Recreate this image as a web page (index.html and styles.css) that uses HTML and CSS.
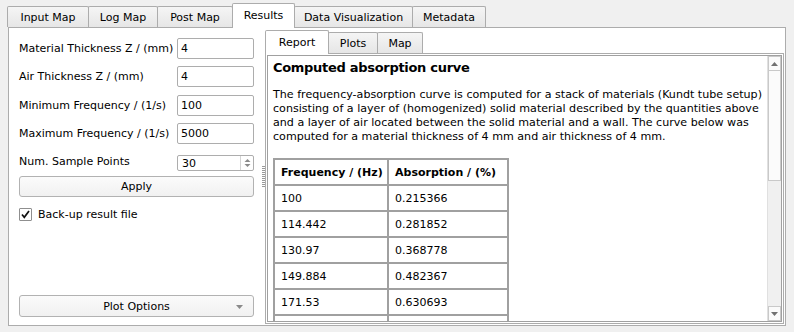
FILE: index.html
```html
<!DOCTYPE html>
<html lang="en">
<head>
    <meta charset="UTF-8">
    <title>Results</title>
    <link rel="stylesheet" href="styles.css">
</head>
<body>
    <div class="window">
        <div class="tabbar">
            <div class="tab tab-input">Input Map</div>
            <div class="tab tab-log">Log Map</div>
            <div class="tab tab-post">Post Map</div>
            <div class="tab tab-results active">Results</div>
            <div class="tab tab-dataviz">Data Visualization</div>
            <div class="tab tab-meta">Metadata</div>
        </div>

        <div class="pane">
            <div class="left">
                <div class="form">
                    <div class="row">
                        <span class="label">Material Thickness Z / (mm)</span>
                        <div class="field">4</div>
                    </div>
                    <div class="row">
                        <span class="label">Air Thickness Z / (mm)</span>
                        <div class="field">4</div>
                    </div>
                    <div class="row">
                        <span class="label">Minimum Frequency / (1/s)</span>
                        <div class="field">100</div>
                    </div>
                    <div class="row">
                        <span class="label">Maximum Frequency / (1/s)</span>
                        <div class="field">5000</div>
                    </div>
                    <div class="row">
                        <span class="label">Num. Sample Points</span>
                        <div class="spin">
                            <span class="spin-value">30</span>
                            <span class="spin-btns">
                                <svg width="7" height="10" viewBox="0 0 7 10">
                                    <path d="M0.5 4 L3.5 1 L6.5 4 Z" fill="#8a8a8a"/>
                                    <path d="M0.5 6 L3.5 9 L6.5 6 Z" fill="#8a8a8a"/>
                                </svg>
                            </span>
                        </div>
                    </div>
                </div>

                <div class="button apply">Apply</div>

                <div class="check">
                    <span class="box">
                        <svg width="11" height="11" viewBox="0 0 11 11">
                            <path d="M2 5.5 L4.3 8.3 L9 2" fill="none" stroke="#111" stroke-width="1.7"/>
                        </svg>
                    </span>
                    Back-up result file
                </div>

                <div class="spacer"></div>

                <div class="button combo">
                    Plot Options
                    <svg class="combo-arrow" width="7" height="4" viewBox="0 0 7 4">
                        <path d="M0 0 L7 0 L3.5 4 Z" fill="#8a8a8a"/>
                    </svg>
                </div>
            </div>

            <div class="splitter"><div class="grip"></div></div>

            <div class="inner">
                <div class="subtabs">
                    <div class="subtab sub-report active">Report</div>
                    <div class="subtab sub-plots">Plots</div>
                    <div class="subtab sub-map">Map</div>
                </div>
                <div class="inner-pane">
                    <div class="browser">
                        <div class="doc">
                            <h3>Computed absorption curve</h3>
                            <p>The frequency-absorption curve is computed for a stack of materials (Kundt tube setup)<br>consisting of a layer of (homogenized) solid material described by the quantities above<br>and a layer of air located between the solid material and a wall. The curve below was<br>computed for a material thickness of 4 mm and air thickness of 4 mm.</p>
                            <table class="data">
                                <tr><th class="c1">Frequency / (Hz)</th><th class="c2">Absorption / (%)</th></tr>
                                <tr><td>100</td><td>0.215366</td></tr>
                                <tr><td>114.442</td><td>0.281852</td></tr>
                                <tr><td>130.97</td><td>0.368778</td></tr>
                                <tr><td>149.884</td><td>0.482367</td></tr>
                                <tr><td>171.53</td><td>0.630693</td></tr>
                                <tr><td></td><td></td></tr>
                            </table>
                        </div>
                        <div class="scrollbar">
                            <div class="sb-btn">
                                <svg width="7" height="4" viewBox="0 0 7 4"><path d="M0 4 L3.5 0 L7 4 Z" fill="#707070"/></svg>
                            </div>
                            <div class="sb-track"><div class="sb-handle"></div></div>
                            <div class="sb-btn">
                                <svg width="7" height="4" viewBox="0 0 7 4"><path d="M0 0 L7 0 L3.5 4 Z" fill="#707070"/></svg>
                            </div>
                        </div>
                    </div>
                </div>
            </div>
        </div>
    </div>
</body>
</html>
```

FILE: styles.css
```css
* {
    box-sizing: border-box;
}
body {
    margin: 0;
    width: 794px;
    height: 332px;
    overflow: hidden;
    background: #f0f0f0;
    font-family: "DejaVu Sans", Tahoma, sans-serif;
    font-size: 11px;
    color: #000;
}
.window {
    padding: 0 8px;
}

/* main tab bar */
.tabbar {
    display: flex;
    align-items: flex-end;
    height: 27px;
    margin-left: -1px;
}
.tab {
    height: 21px;
    margin-right: -1px;
    border: 1px solid #acacac;
    border-bottom: none;
    border-radius: 2px 2px 0 0;
    background: linear-gradient(#f5f5f5, #e6e6e6);
    display: flex;
    align-items: center;
    justify-content: center;
    white-space: nowrap;
}
.tab.active {
    height: 25px;
    margin-bottom: -1px;
    padding-bottom: 2px;
    background: #fff;
    position: relative;
    z-index: 1;
}
.tab-input { width: 82px; }
.tab-log { width: 70px; }
.tab-post { width: 76px; }
.tab-results { width: 63px; }
.tab-dataviz { width: 119px; }
.tab-meta { width: 74px; }

.pane {
    height: 299px;
    border: 1px solid #acacac;
    background: #fff;
    display: flex;
    padding: 0 1px 1px 0;
    overflow: hidden;
}

/* left form panel */
.left {
    width: 251px;
    padding: 10px 6px 7px 10px;
    display: flex;
    flex-direction: column;
}
.form {
    display: flex;
    flex-direction: column;
    gap: 7.33px;
}
.row {
    height: 21px;
    display: flex;
    align-items: center;
}
.label {
    width: 158px;
    white-space: nowrap;
}
.field {
    width: 77px;
    height: 21px;
    border: 1px solid #adadad;
    border-radius: 2px;
    padding-left: 3px;
    display: flex;
    align-items: center;
}
.spin {
    width: 77px;
    height: 16px;
    margin-top: 2px;
    border: 1px solid #adadad;
    border-radius: 2px;
    display: flex;
    align-items: center;
}
.spin-value {
    flex: 1;
    padding-left: 4px;
    padding-top: 1px;
}
.spin-btns {
    width: 13px;
    height: 100%;
    border-left: 1px solid #d4d4d4;
    display: flex;
    align-items: center;
    justify-content: center;
}
.button {
    height: 21px;
    border: 1px solid #b2b2b2;
    border-radius: 3px;
    background: linear-gradient(#fbfbfb, #f1f1f1);
    display: flex;
    align-items: center;
    justify-content: center;
}
.apply {
    margin-top: 4px;
}
.check {
    margin-top: 10px;
    height: 14px;
    display: flex;
    align-items: center;
    gap: 6px;
}
.box {
    width: 13px;
    height: 13px;
    border: 1px solid #8f8f8f;
    border-radius: 1px;
    background: #fff;
    display: flex;
    align-items: center;
    justify-content: center;
}
.spacer {
    flex: 1;
}
.combo {
    height: 22px;
    position: relative;
}
.combo-arrow {
    position: absolute;
    right: 10px;
    top: 9px;
}

/* splitter */
.splitter {
    width: 5px;
    display: flex;
    align-items: center;
    justify-content: center;
}
.grip {
    width: 3px;
    height: 21px;
    margin-left: 1px;
    background: repeating-linear-gradient(to bottom, #9a9a9a 0 1px, transparent 1px 2px);
}

/* right tab widget */
.inner {
    width: 519px;
    min-height: 0;
    display: flex;
    flex-direction: column;
}
.subtabs {
    display: flex;
    align-items: flex-end;
    height: 25px;
    flex: none;
}
.subtab {
    height: 21px;
    margin-right: -1px;
    border: 1px solid #acacac;
    border-bottom: none;
    border-radius: 2px 2px 0 0;
    background: linear-gradient(#f5f5f5, #e6e6e6);
    display: flex;
    align-items: center;
    justify-content: center;
}
.subtab.active {
    height: 24px;
    margin-bottom: -1px;
    padding-bottom: 1px;
    background: #fff;
    position: relative;
    z-index: 1;
}
.sub-report { width: 64px; }
.sub-plots { width: 50px; }
.sub-map { width: 46px; }

.inner-pane {
    flex: 1;
    min-height: 0;
    border: 1px solid #acacac;
    padding: 1px;
    display: flex;
}
.browser {
    flex: 1;
    min-height: 0;
    border: 1px solid #a0a0a0;
    display: flex;
    overflow: hidden;
}
.doc {
    flex: 1;
    min-width: 0;
    overflow: hidden;
    padding: 3px 5px;
}
.doc h3 {
    margin: 0;
    font-size: 13px;
    line-height: 17px;
    letter-spacing: -0.3px;
    font-weight: bold;
}
.doc p {
    margin: 12px 0 14px;
    font-size: 11.1px;
    line-height: 14px;
    white-space: nowrap;
}
.data {
    border-collapse: separate;
    border-spacing: 0;
    border: 1px solid #a0a0a0;
    font-size: 11px;
    table-layout: fixed;
    width: 236px;
}
.data th,
.data td {
    height: 26px;
    border: 1px solid #a0a0a0;
    padding: 0 2px 0 6px;
    text-align: left;
    white-space: nowrap;
    overflow: hidden;
}
.data th {
    font-weight: bold;
}
.c1 { width: 114px; }
.c2 { width: 120px; }

/* scroll bar */
.scrollbar {
    width: 14px;
    background: #f0f0f0;
    border-left: 1px solid #e0e0e0;
    display: flex;
    flex-direction: column;
}
.sb-btn {
    height: 15px;
    flex: none;
    border: 1px solid #c9c9c9;
    background: #fafafa;
    display: flex;
    align-items: center;
    justify-content: center;
}
.sb-track {
    flex: 1;
}
.sb-handle {
    height: 110px;
    border: 1px solid #c9c9c9;
    border-top: none;
    background: #fbfbfb;
}
```
